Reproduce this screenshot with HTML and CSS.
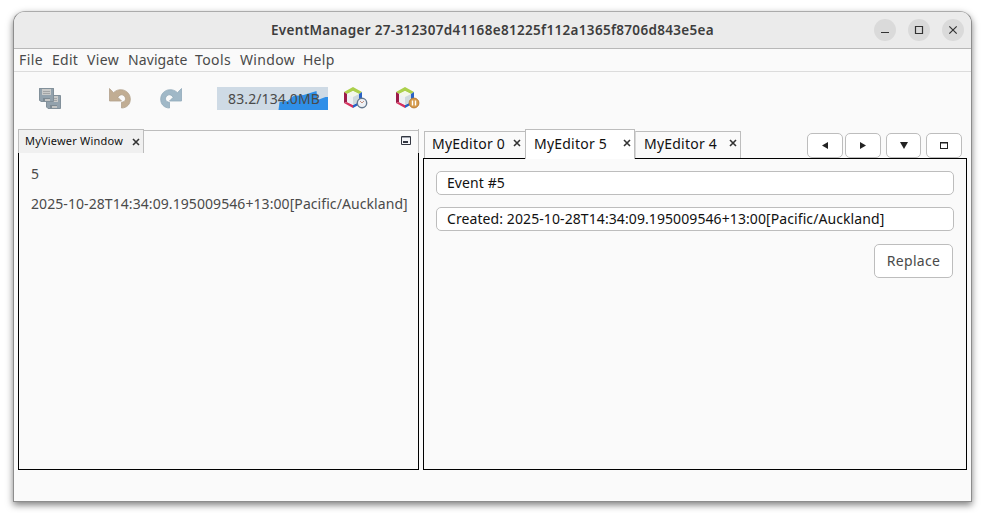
FILE: index.html
```html
<!DOCTYPE html>
<html lang="en">
<head>
<meta charset="utf-8">
<title>EventManager</title>
<link rel="stylesheet" href="styles.css">
</head>
<body>
<main class="window">
  <header class="titlebar">
    <h1 class="title">EventManager 27-312307d41168e81225f112a1365f8706d843e5ea</h1>
    <div class="controls">
      <span class="control"><svg width="22" height="22"><path d="M7 13.500h8"/></svg></span>
      <span class="control"><svg width="22" height="22"><path d="M7.500 7.500h7v7h-7z"/></svg></span>
      <span class="control"><svg width="22" height="22"><path d="M7.300 7.300l7.400 7.400M14.700 7.300l-7.400 7.400"/></svg></span>
    </div>
  </header>
  <nav class="menubar">
    <span class="m-file">File</span><span class="m-edit">Edit</span><span class="m-view">View</span><span class="m-navigate">Navigate</span><span class="m-tools">Tools</span><span class="m-window">Window</span><span class="m-help">Help</span>
  </nav>
  <div class="toolbar">
    <svg class="save" width="22" height="21" viewBox="0 0 22 21">
      <g id="disk"><path d="M.5.5h14v13H2L.5 12z" fill="#93a2ad" stroke="#82909a"/><path d="M3 1h9v6H3z" fill="#c9cac9"/><path d="M4 3.500h7M4 5.500h7" stroke="#a3a5a6"/><path d="M4 10h7v3H4z" fill="#7e8b94"/><path d="M6 11h5v2H6z" fill="#c5c6c5"/></g>
      <use href="#disk" x="7" y="7"/>
      <use href="#disk"/>
    </svg>
    <svg class="undo" width="22" height="21" viewBox="0 0 22 21"><path d="M.5.5v12.500h12L8.800 9.300C10.300 7 12.500 6.300 14 7c4 2 3 7.200-1.500 7.300v5.700C18 20 21.500 16 21.300 10.800 21 2.500 11-1.500 4.500 4.700z" fill="#c1ad93" stroke="#b3a18c" stroke-width=".8"/></svg>
    <svg class="redo" width="22" height="21" viewBox="0 0 22 21"><path d="M21.500.5v12.500h-12l3.700-3.700C11.700 7 9.500 6.300 8 7c-4 2-3 7.200 1.500 7.300v5.700C4 20 .5 16 .7 10.800 1 2.500 11-1.500 17.500 4.700z" fill="#a0b8c7" stroke="#91aaba" stroke-width=".8"/></svg>
    <div class="memory">
      <svg width="111" height="23"><path d="M61.500 23L62.500 15l8-1 6-5 10-1 13-4 1 9 8-3h3v13z" fill="#2f8fe8"/></svg>
      <span class="memory-text">83.2/134.0MB</span>
    </div>
    <svg class="cube profile" width="24" height="23" viewBox="0 0 24 23">
      <g id="cube"><path d="M0 5L9 0l9 5-3 2-6-3-6 3z" fill="#acd04c"/><path d="M0 5l3 2v8l-3 1z" fill="#9c1b48"/><path d="M0 16l3-1 6 3v3z" fill="#d73360"/><path d="M18 5l-3 2v8l-6 3v3l9-5z" fill="#2962c4"/><path d="M3 7l6-3 6 3-6 3z" fill="#f3f7e9"/><path d="M3 7l6 3v8l-6-3z" fill="#eef1f3"/><path d="M9 10l6-3v8l-6 3z" fill="#cfdadd"/></g>
      <circle cx="18" cy="16" r="4.700" fill="#eef1f5" stroke="#65798f" stroke-width="1.400"/><path d="M16 14l2 2 2-2" fill="none" stroke="#c49281"/>
    </svg>
    <svg class="cube pause" width="24" height="23" viewBox="0 0 24 23"><use href="#cube"/><circle cx="18" cy="16" r="4.900" fill="#d69b4b" stroke="#bd7e35"/><path d="M16.500 13.500v5M19.500 13.500v5" stroke="#fff" stroke-width="1.400"/></svg>
  </div>
  <div class="workspace">
    <section class="viewer">
      <div class="viewer-head">
        <div class="viewer-tab"><span class="viewer-name">MyViewer Window</span><svg class="close" width="8" height="8"><path d="M1 1l6 6M7 1L1 7"/></svg></div>
        <svg class="minimise" width="10" height="9"><path d="M.5.5h9v8h-9z" fill="#f4f5f8" stroke="#333741"/><path d="M1 1.500h8" stroke="#9ca0aa"/><path d="M2 5h5v2H2z" fill="#333741"/></svg>
      </div>
      <div class="viewer-body">
        <p class="event-id">5</p>
        <p class="event-time">2025-10-28T14:34:09.195009546+13:00[Pacific/Auckland]</p>
      </div>
    </section>
    <section class="editor">
      <div class="tabs">
        <div class="tab tab-first"><span>MyEditor 0</span><svg class="close" width="8" height="8"><path d="M1 1l6 6M7 1L1 7"/></svg></div>
        <div class="tab active"><span>MyEditor 5</span><svg class="close" width="8" height="8"><path d="M1 1l6 6M7 1L1 7"/></svg></div>
        <div class="tab tab-last"><span>MyEditor 4</span><svg class="close" width="8" height="8"><path d="M1 1l6 6M7 1L1 7"/></svg></div>
        <div class="tab-buttons">
          <button><svg width="6" height="7"><path d="M6 0v7L0 3.500z"/></svg></button>
          <button><svg width="6" height="7"><path d="M0 0v7l6-3.500z"/></svg></button>
          <button class="list"><svg width="8" height="7"><path d="M0 0h8L4 7z"/></svg></button>
          <button><svg width="8" height="7"><path d="M0 0h8v7H0zM1 1.500v4.500h6V1.500z" fill-rule="evenodd"/></svg></button>
        </div>
      </div>
      <div class="editor-body">
        <div class="field">Event #5</div>
        <div class="field">Created: 2025-10-28T14:34:09.195009546+13:00[Pacific/Auckland]</div>
        <button class="replace"><span>Replace</span></button>
      </div>
    </section>
  </div>
</main>
</body>
</html>
```
FILE: styles.css
```css
* { box-sizing: border-box; }
body {
  margin: 0;
  padding: 11px 13px;
  background: #fff;
  font-family: "Noto Sans", "Open Sans", sans-serif;
  font-size: 14px;
  color: #4a4a4a;
}
h1, p { margin: 0; font: inherit; }
svg { display: block; }
.window {
  width: 959px;
  height: 491px;
  border: 1px solid #8d8d8d;
  border-top-color: #ababab;
  border-radius: 12px 12px 0 0;
  background: #fafafa;
  box-shadow: 0 3px 7px rgba(0, 0, 0, .5);
  overflow: hidden;
}
.titlebar {
  height: 37px;
  background: #ebebeb;
  border-bottom: 1px solid #b8b8b8;
  display: flex;
  align-items: center;
  padding-right: 7px;
}
.title {
  flex: 1;
  padding-left: 257px;
  font-size: 13.500px;
  font-weight: 600;
  letter-spacing: .32px;
  color: #3d3d3d;
  white-space: nowrap;
}
.controls { display: flex; gap: 12px; }
.control { width: 22px; height: 22px; border-radius: 50%; background: #dadada; }
.control svg { fill: none; stroke: #333; stroke-width: 1.200; }
.menubar {
  height: 23px;
  border-bottom: 1px solid #dcdcdc;
  display: flex;
  padding-left: 5px;
  line-height: 22px;
  letter-spacing: .25px;
}
.m-file { width: 33px; letter-spacing: .45px; }
.m-edit { width: 35px; }
.m-view { width: 41px; letter-spacing: .4px; }
.m-navigate { width: 67px; letter-spacing: .1px; }
.m-tools { width: 45px; letter-spacing: .4px; }
.m-window { width: 63px; letter-spacing: .35px; }
.toolbar { height: 57px; display: flex; align-items: flex-start; padding: 16px 0 0 25px; }
.undo { margin-left: 48px; }
.redo { margin-left: 29px; }
.memory { margin: -1px 0 0 35px; width: 111px; height: 23px; background: #cedae5; display: grid; }
.memory > * { grid-area: 1 / 1; }
.memory-text { padding-left: 11px; line-height: 23px; letter-spacing: .12px; }
.cube { margin-top: -1px; }
.profile { margin-left: 16px; }
.pause { margin-left: 28px; }
.workspace { display: flex; gap: 4px; padding-left: 4px; }
.viewer { width: 401px; }
.viewer-head {
  height: 24px;
  display: flex;
  justify-content: space-between;
  background: linear-gradient(#bdbdbd, #bdbdbd) 0 1px / 100% 1px no-repeat;
  border-right: 1px solid;
  border-image: linear-gradient(transparent 1px, #bdbdbd 1px) 1;
}
.viewer-tab {
  width: 126px;
  border: 1px solid #bdbdbd;
  border-bottom: 0;
  background: #f0f0f0;
  display: flex;
  padding: 0 0 0 6px;
  color: #111;
  font-size: 11px;
  letter-spacing: .2px;
  line-height: 22px;
}
.viewer-name { width: 107px; }
.close { fill: none; stroke: #333; stroke-width: 1.600; }
.viewer-tab .close { margin-top: 8px; }
.minimise { margin: 7px 7px 0 0; }
.viewer-body {
  height: 317px;
  border: 1px solid #000;
  border-top: 0;
  padding: 11px 12px;
  line-height: 20px;
  white-space: nowrap;
}
.event-time { margin-top: 10px; letter-spacing: .075px; }
.editor { width: 544px; }
.tabs { height: 29px; display: flex; align-items: flex-end; padding-left: 1px; color: #111; }
.tab {
  height: 27px;
  border: 1px solid #bdbdbd;
  border-bottom: 0;
  display: flex;
  justify-content: space-between;
  padding: 0 4px 0 7px;
  line-height: 25px;
  letter-spacing: .22px;
}
.tab .close { margin-top: 7px; }
.tab-first { width: 101px; border-right: 0; }
.tab-first span, .tab-last span { margin-top: -1px; }
.active { width: 110px; height: 30px; margin-bottom: -1px; background: #fff; line-height: 28px; padding-left: 8px; padding-right: 3px; }
.active .close { margin-top: 9px; }
.tab-last { width: 106px; padding-left: 8px; padding-right: 3px; border-left-color: #d8d8d8; }
.tab-buttons { display: flex; margin: 0 0 0 66px; }
button {
  border: 1px solid #bdbdbd;
  border-radius: 5px;
  background: #fff;
  padding: 0;
  font: inherit;
  color: #4a4a4a;
  display: flex;
  align-items: center;
  justify-content: center;
}
.tab-buttons button { width: 36px; height: 25px; margin-right: 2px; }
.tab-buttons .list { width: 35px; margin-left: 3px; margin-right: 5px; }
.tab-buttons svg { fill: #222; }
.editor-body {
  height: 312px;
  border: 1px solid #000;
  padding: 12px;
  display: flex;
  flex-direction: column;
  gap: 12px;
}
.field {
  height: 24px;
  border: 1px solid #bdbdbd;
  border-radius: 5px;
  background: #fff;
  color: #111;
  line-height: 22px;
  padding-left: 10px;
  letter-spacing: .09px;
}
.replace { width: 79px; height: 34px; align-self: flex-end; margin: 1px 1px 0 0; padding-bottom: 2px; letter-spacing: .3px; }
```
